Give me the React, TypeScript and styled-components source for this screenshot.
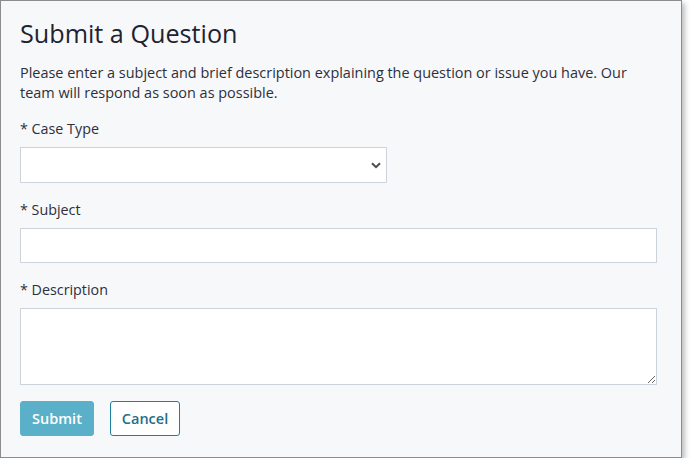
import React from 'react';
import styled, { createGlobalStyle } from 'styled-components';

const GlobalStyle = createGlobalStyle`
  body {
    margin: 0;
    background: #ffffff;
    font-family: 'Open Sans', 'Liberation Sans', sans-serif;
  }
`;

const App: React.FC = () => {
  return (
    <>
      <GlobalStyle />
      <Panel>
        <Title>Submit a Question</Title>
        <Intro>
          Please enter a subject and brief description explaining the question or issue you have. Our
          team will respond as soon as possible.
        </Intro>
        <Field>
          <Label>* Case Type</Label>
          <Select>
            <option value=""></option>
          </Select>
        </Field>
        <Field>
          <Label>* Subject</Label>
          <Input type="text" />
        </Field>
        <Field>
          <Label>* Description</Label>
          <TextArea />
        </Field>
        <Actions>
          <PrimaryBtn>Submit</PrimaryBtn>
          <SecondaryBtn>Cancel</SecondaryBtn>
        </Actions>
      </Panel>
    </>
  );
};

export default App;

const Panel = styled.div`
  box-sizing: border-box;
  width: 682px;
  height: 458px;
  background: #f7f8fa;
  border: 1px solid #8c8c8c;
  box-shadow: 3px 3px 5px rgba(0, 0, 0, 0.25);
  padding: 15px 24px 0 19px;
  display: flex;
  flex-direction: column;
  color: #2d2f3a;
`;

const Title = styled.h1`
  margin: 0;
  font-size: 25.2px;
  font-weight: 400;
  line-height: 34px;
  color: #1f2330;
`;

const Intro = styled.p`
  margin: 13px 0 0;
  font-size: 14.45px;
  line-height: 20px;
  color: #2d2f3a;
`;

const Field = styled.div`
  display: flex;
  flex-direction: column;
  align-items: flex-start;
  gap: 8px;
  margin-top: 17px;

  &:first-of-type {
    margin-top: 16px;
  }
`;

const Label = styled.label`
  font-size: 14.3px;
  line-height: 20px;
  color: #2d2f3a;
`;

const Select = styled.select`
  box-sizing: border-box;
  width: 367px;
  height: 36px;
  background: #ffffff;
  border: 1px solid #cdd3da;
  border-radius: 0;
  font-family: inherit;
  font-size: 14px;
  padding: 0 8px;
  appearance: none;
  background-image: url("data:image/svg+xml,%3Csvg xmlns='http://www.w3.org/2000/svg' width='10' height='7' viewBox='0 0 10 7'%3E%3Cpath d='M1 1.2l4 4 4-4' fill='none' stroke='%234a4d55' stroke-width='2'/%3E%3C/svg%3E");
  background-repeat: no-repeat;
  background-position: right 5px center;
`;

const Input = styled.input`
  box-sizing: border-box;
  width: 100%;
  height: 35px;
  background: #ffffff;
  border: 1px solid #cdd3da;
  font-family: inherit;
  font-size: 14px;
  padding: 0 8px;
`;

const TextArea = styled.textarea`
  box-sizing: border-box;
  width: 100%;
  height: 77px;
  background: #ffffff;
  border: 1px solid #cdd3da;
  font-family: inherit;
  font-size: 14px;
  padding: 6px 8px;
  resize: vertical;
`;

const Actions = styled.div`
  display: flex;
  gap: 16px;
  margin-top: 16px;
`;

const BaseBtn = styled.button`
  box-sizing: border-box;
  height: 35px;
  border-radius: 3px;
  font-family: inherit;
  font-size: 14.5px;
  font-weight: 600;
  padding: 0 10px;
  cursor: pointer;
`;

const PrimaryBtn = styled(BaseBtn)`
  width: 74px;
  background: #5ab0c8;
  border: 1px solid #5ab0c8;
  color: #ffffff;
`;

const SecondaryBtn = styled(BaseBtn)`
  width: 70px;
  background: #ffffff;
  border: 1px solid #1e7fa0;
  color: #1e6e8c;
`;
